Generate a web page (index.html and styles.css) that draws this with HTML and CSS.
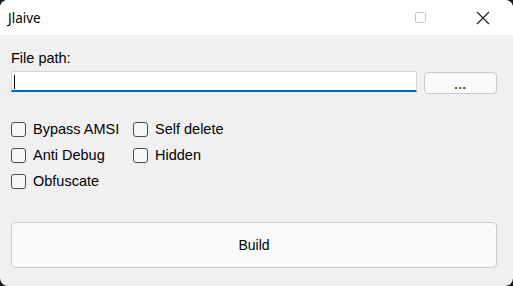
FILE: index.html
```html
<!DOCTYPE html>
<html>
<head>
<meta charset="utf-8">
<link rel="stylesheet" href="styles.css">
</head>
<body>
<div class="window">
  <div class="titlebar">
    <span class="title">Jlaive</span>
    <div class="controls">
      <span class="ctl max">
        <svg width="12" height="12" viewBox="0 0 12 12"><rect x="0.5" y="0.5" width="10" height="10" rx="1" fill="none" stroke="#c6c6c6" stroke-width="1"/></svg>
      </span>
      <span class="ctl close">
        <svg width="14" height="14" viewBox="0 0 14 14"><path d="M1 1 L13 13 M13 1 L1 13" stroke="#1a1a1a" stroke-width="1.1" fill="none"/></svg>
      </span>
    </div>
  </div>
  <div class="content">
    <div class="label">File path:</div>
    <div class="pathrow">
      <div class="input"><span class="caret"></span></div>
      <div class="btn small">...</div>
    </div>
    <div class="checks">
      <div class="check"><span class="box"></span><span>Bypass AMSI</span></div>
      <div class="check"><span class="box"></span><span>Self delete</span></div>
      <div class="check"><span class="box"></span><span>Anti Debug</span></div>
      <div class="check"><span class="box"></span><span>Hidden</span></div>
      <div class="check"><span class="box"></span><span>Obfuscate</span></div>
    </div>
    <div class="btn build">Build</div>
  </div>
</div>
</body>
</html>
```
FILE: styles.css
```css
html, body {
  margin: 0;
  padding: 0;
  background: #1c1c1c;
}
.window {
  width: 513px;
  height: 286px;
  background: #f0f0f0;
  border-radius: 8px;
  overflow: hidden;
  display: flex;
  flex-direction: column;
  font-family: "Liberation Sans", Arial, sans-serif;
  color: #000;
}
.titlebar {
  height: 35px;
  background: #ffffff;
  display: flex;
  align-items: center;
  justify-content: space-between;
}
.title {
  font-family: "Noto Sans", "Open Sans", sans-serif;
  font-size: 13.5px;
  padding-left: 8px;
  color: #000;
}
.controls {
  display: flex;
  height: 100%;
}
.ctl {
  display: flex;
  align-items: center;
  justify-content: center;
  height: 100%;
}
.max {
  width: 12px;
  margin-right: 49px;
}
.close {
  width: 14px;
  margin-right: 23px;
}
.content {
  padding: 15px 16px 0 11px;
  display: flex;
  flex-direction: column;
  font-size: 14.5px;
}
.label {
  line-height: 17px;
  height: 17px;
}
.pathrow {
  margin-top: 4px;
  display: flex;
  align-items: flex-start;
}
.input {
  width: 404px;
  height: 18px;
  background: #fff;
  border: 1px solid #d4d4d4;
  border-bottom: 2px solid #0067c0;
  position: relative;
}
.caret {
  position: absolute;
  left: 2px;
  top: 3px;
  width: 1px;
  height: 14px;
  background: #000;
}
.btn {
  background: #fafafa;
  border: 1px solid #c9c9c9;
  border-radius: 4px;
  display: flex;
  align-items: center;
  justify-content: center;
  box-sizing: border-box;
}
.small {
  margin-left: 7px;
  margin-top: 1px;
  width: 73px;
  height: 22px;
  font-size: 13px;
  font-weight: bold;
  color: #6a3a00;
  padding-top: 3px;
  letter-spacing: 0.5px;
}
.checks {
  margin-top: 22px;
  display: grid;
  grid-template-columns: 122px auto;
  grid-auto-rows: 26px;
  justify-content: start;
}
.check {
  display: flex;
  align-items: center;
  gap: 7px;
}
.box {
  width: 13px;
  height: 13px;
  border: 1px solid #4c4c4c;
  border-radius: 3px;
  background: #f7f7f7;
  flex: none;
}
.build {
  margin-top: 28px;
  height: 46px;
  font-size: 14px;
}
```
